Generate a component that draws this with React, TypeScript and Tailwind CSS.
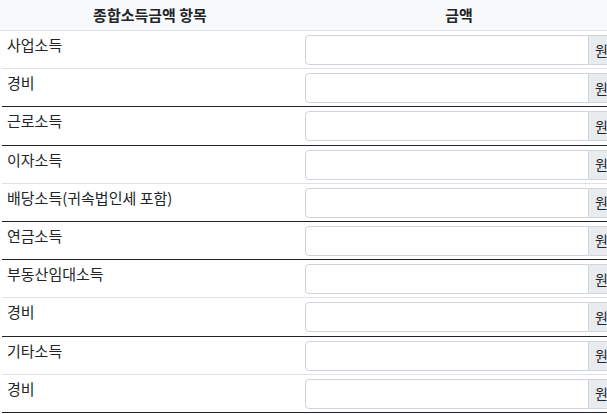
const ROWS: { label: string; dark: boolean }[] = [
  { label: "사업소득", dark: false },
  { label: "경비", dark: true },
  { label: "근로소득", dark: true },
  { label: "이자소득", dark: false },
  { label: "배당소득(귀속법인세 포함)", dark: true },
  { label: "연금소득", dark: true },
  { label: "부동산임대소득", dark: false },
  { label: "경비", dark: true },
  { label: "기타소득", dark: false },
  { label: "경비", dark: true },
];

export default function App() {
  return (
    <div
      className="w-[607px] h-[414px] overflow-hidden bg-white text-[#212529]"
      style={{ fontFamily: "'Noto Sans CJK KR', 'Noto Sans', sans-serif" }}
    >
      <div className="w-[618px]">
        {/* Header */}
        <div className="grid grid-cols-[300px_318px] h-[31px] bg-[#f8f9fa] border-b border-[#dee2e6] text-[15px] font-bold">
          <div className="flex items-center justify-center">종합소득금액 항목</div>
          <div className="flex items-center justify-center">금액</div>
        </div>

        {/* Rows */}
        {ROWS.map((row, i) => (
          <div
            key={i}
            className={
              row.dark
                ? "grid grid-cols-[300px_318px] h-[38.2px] border-b border-[#212529] ml-[2px]"
                : "grid grid-cols-[300px_318px] h-[38.2px] border-b border-[#dee2e6] ml-[2px]"
            }
          >
            <div className="pl-[5px] pt-[3px] text-[15px] leading-[22px]">{row.label}</div>
            <div className="pl-[3px] pr-[5px] py-[4px] flex">
              <input
                type="text"
                className="flex-1 min-w-0 h-[30px] border border-[#ced4da] rounded-l-[4px] bg-white outline-none"
              />
              <span className="h-[30px] flex items-center px-[6px] bg-[#e9ecef] border border-l-0 border-[#ced4da] rounded-r-[4px] text-[14px]">
                원
              </span>
            </div>
          </div>
        ))}
      </div>
    </div>
  );
}
